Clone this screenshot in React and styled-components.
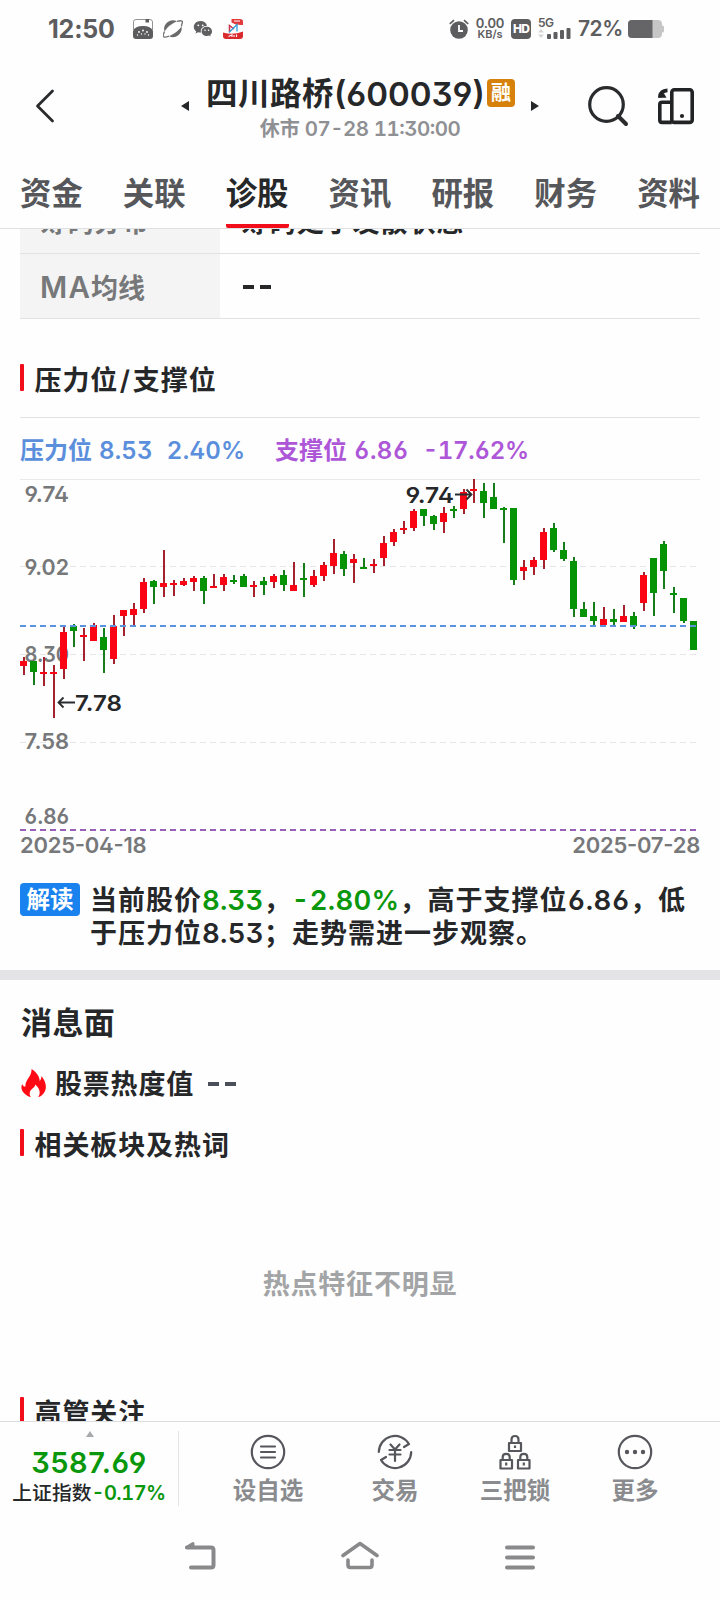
import React from 'react';
import styled, { createGlobalStyle } from 'styled-components';

// [isUp, high, bodyTop, bodyBottom, low]
const candles = [
  [1, 178, 182, 187, 196], [0, 182, 182, 193, 206], [1, 178, 193, 195, 207], [1, 186, 193, 195, 239],
  [1, 148, 153, 190, 200], [0, 145, 147, 152, 168], [1, 149, 156, 158, 182], [1, 144, 146, 162, 162],
  [0, 149, 158, 171, 194], [1, 136, 147, 180, 185], [1, 131, 131, 137, 157], [1, 124, 130, 136, 147],
  [1, 99, 103, 130, 134], [0, 101, 102, 108, 125], [1, 71, 104, 108, 118], [1, 101, 104, 106, 117],
  [1, 99, 102, 106, 107], [1, 97, 99, 103, 112], [0, 97, 99, 112, 125], [1, 95, 107, 109, 109],
  [1, 95, 98, 106, 112], [0, 96, 101, 103, 105], [0, 95, 97, 108, 108], [1, 102, 106, 108, 118],
  [0, 98, 102, 106, 116], [1, 95, 97, 103, 109], [0, 91, 96, 106, 112], [1, 83, 106, 112, 112],
  [0, 84, 99, 101, 118], [1, 91, 97, 106, 108], [1, 83, 86, 97, 102], [1, 60, 74, 87, 95],
  [0, 72, 75, 90, 97], [1, 75, 80, 84, 104], [0, 79, 88, 90, 90], [1, 80, 85, 87, 94],
  [1, 57, 64, 79, 87], [1, 50, 53, 63, 67], [1, 42, 49, 51, 55], [1, 30, 32, 49, 52],
  [0, 30, 30, 37, 47], [0, 36, 37, 45, 51], [1, 28, 34, 43, 54], [0, 27, 30, 32, 39],
  [1, 10, 13, 30, 35], [1, 0, 10, 12, 24], [0, 4, 12, 24, 39], [0, 4, 18, 30, 30],
  [0, 28, 29, 31, 64], [0, 29, 29, 101, 106], [1, 81, 88, 92, 101], [1, 78, 81, 88, 96],
  [1, 49, 53, 81, 90], [0, 44, 49, 71, 73], [0, 63, 71, 80, 82], [0, 78, 82, 130, 138],
  [0, 123, 130, 138, 138], [0, 123, 137, 142, 148], [1, 128, 140, 146, 146], [0, 130, 140, 143, 147],
  [1, 126, 137, 143, 143], [0, 133, 137, 147, 150], [1, 93, 96, 124, 132], [0, 79, 79, 114, 137],
  [0, 62, 65, 92, 110], [0, 108, 114, 116, 134], [0, 119, 119, 142, 144], [0, 142, 142, 171, 171],
];

const axisLabels = [
  ['9.74', 22.5],
  ['9.02', 96],
  ['8.30', 183],
  ['7.58', 270],
  ['6.86', 345],
];

const tabs = ['资金', '关联', '诊股', '资讯', '研报', '财务', '资料'];

const App = () => {
  return (
    <Screen>
      <GlobalStyle />
      <StatusBar />
      <Header>
        <BackButton>
          <svg width="20" height="36" viewBox="0 0 20 36">
            <path d="M17.5 3 L2.5 18 L17.5 33" fill="none" stroke="#2a2b2d" strokeWidth="2.8" strokeLinecap="round" strokeLinejoin="round" />
          </svg>
        </BackButton>
        <Arrow $dir="left" />
        <TitleBlock>
          <TitleLine>
            <StockName>四川路桥</StockName>
            <StockCode>(600039)</StockCode>
            <MarginBadge>融</MarginBadge>
          </TitleLine>
          <SubTitle>
            休市 <SubTime>07-28 11:30:00</SubTime>
          </SubTitle>
        </TitleBlock>
        <Arrow $dir="right" />
        <Tools>
          <svg width="41" height="42" viewBox="0 0 41 42">
            <circle cx="18.5" cy="18.5" r="16.8" fill="none" stroke="#2a2b2d" strokeWidth="3.2" />
            <path d="M30 30 L38 38" stroke="#2a2b2d" strokeWidth="4" strokeLinecap="round" />
          </svg>
          <svg width="36" height="37" viewBox="0 0 36 37">
            <g fill="none" stroke="#222325" strokeWidth="3.6">
              <rect x="13.8" y="1.8" width="20.4" height="32.6" rx="2.5" />
              <path d="M13.8 14.2 H4 Q1.8 14.2 1.8 16.4 V32 Q1.8 34.4 4 34.4 H13.8" />
              <path d="M2.2 9.5 Q2.2 2.6 9.5 2.4" />
            </g>
            <path d="M0 9.8 H8.5 L6 5.5 L1 4.5 Z" fill="#222325" />
            <circle cx="24" cy="28" r="2.1" fill="#222325" />
          </svg>
        </Tools>
      </Header>
      <TabBar>
        {tabs.map((tab) => (
          <Tab key={tab} $active={tab === '诊股'}>{tab}</Tab>
        ))}
      </TabBar>
      <Content>
        <Table>
          <Row>
            <RowLabel>筹码分布</RowLabel>
            <RowValue>筹码处于发散状态</RowValue>
          </Row>
          <Row>
            <RowLabel><Latin>MA</Latin>均线</RowLabel>
            <RowValue><Dashes /></RowValue>
          </Row>
        </Table>
        <SectionTitle $top={45}>压力位<Slash>/</Slash>支撑位</SectionTitle>
        <Legend>
          <LegendItem $color="#5b8fdc" $width={255}>
            压力位<LegendNum $left={7} $ls={0.2}>8.53</LegendNum><LegendNum $left={14} $ls={0.3}>2.40%</LegendNum>
          </LegendItem>
          <LegendItem $color="#ad57d8">
            支撑位<LegendNum $left={7} $ls={0.4}>6.86</LegendNum><LegendNum $left={14} $ls={-0.3}>-17.62%</LegendNum>
          </LegendItem>
        </Legend>
        <CandleChart />
        <DateRow>
          <span>2025-04-18</span>
          <span>2025-07-28</span>
        </DateRow>
        <Reading>
          <ReadingTag>解读</ReadingTag>
          <ReadingText>
            当前股价<Num $green $ls={0.2}>8.33</Num>，<Num $green $ls={0.3}>-2.80%</Num>，高于支撑位<Num $ls={0.4}>6.86</Num>，低
            <br />
            于压力位<Num $ls={0.3}>8.53</Num>；走势需进一步观察。
          </ReadingText>
        </Reading>
        <Band />
        <BlockTitle>消息面</BlockTitle>
        <HeatRow>
          <svg width="26" height="29" viewBox="0 0 26 29">
            <path d="M10.5 0 C16 3.5 18.5 7.5 18.7 12 C20 10.8 20.5 9 20.3 7 C24.5 11.5 26.3 18 23.7 22.8 C22.3 25.5 20 27.4 17 28.3 C19.8 24.5 19.3 19.8 14.2 15.5 C14.2 19 9.5 19.5 8.8 23.5 C8.5 25.3 8.8 27 9.8 28.3 C2.5 26 -1.5 20 1.3 15 C2 17 3.2 17.8 4.4 17.5 C4 10.5 11 7.5 10.5 0 Z" fill="#ff0a14" />
          </svg>
          <HeatText>股票热度值</HeatText>
          <Dashes $cool />
        </HeatRow>
        <SectionTitle $top={31}>相关板块及热词</SectionTitle>
        <Empty>热点特征不明显</Empty>
        <SectionTitle>高管关注</SectionTitle>
      </Content>
      <BottomBar />
      <SystemNav />
    </Screen>
  );
};

const StatusBar = () => (
  <StatusRow>
    <Clock>12:50</Clock>
    <StatusIcons>
      <svg width="20" height="20" viewBox="0 0 20 20">
        <path d="M.5 11 V3 Q.5 .5 3 .5 H17 Q19.5 .5 19.5 3 V11" fill="#fff" stroke="#777" strokeWidth=".8" />
        <path d="M0 12 Q2 7 10 7 Q18 7 20 12 V17 Q20 20 17 20 H3 Q0 20 0 17 Z" fill="#5c5c5e" />
        <path d="M12.5 0 H16 V3.5 H12.5 Z" fill="#5c5c5e" />
        <g fill="#fff">
          <circle cx="6" cy="13" r=".9" /><circle cx="10" cy="11.5" r=".9" /><circle cx="14" cy="13" r=".9" />
          <circle cx="8.5" cy="15" r=".7" /><circle cx="12" cy="15" r=".7" /><circle cx="4.5" cy="16" r=".7" /><circle cx="15.5" cy="16" r=".7" />
        </g>
      </svg>
      <svg width="20" height="20" viewBox="0 0 20 20">
        <path d="M1.5 12.5 A8.8 8.8 0 0 1 14 2.3 Q5.5 6 1.5 12.5 Z" fill="#6a6a6c" />
        <path d="M18.5 7.5 A8.8 8.8 0 0 1 6 17.2 Q14.500 13.500 18.500 7.500 Z" fill="#6a6a6c" />
        <path d="M14 2.3 Q21.500 .2 18.700 5.500 L18.500 7.500 M6 17.200 Q-1.500 20 .8 14.300 L1.500 12.500" fill="none" stroke="#777" strokeWidth="1.400" />
      </svg>
      <svg width="20" height="20" viewBox="0 0 20 20">
        <path d="M7.5 2 C3.5 2 .8 4.8 .8 7.9 C.8 9.8 1.8 11.3 3.2 12.4 L2.5 14.4 L5 13.2 Q6.5 13.7 8 13.5 C7 9.8 10 6.8 14 6.8 C13.3 4 10.7 2 7.5 2 Z" fill="#5f5f61" />
        <path d="M13.8 7.8 C10.8 7.8 8.6 9.9 8.6 12.4 C8.6 15 11 17 13.8 17 Q14.9 17 15.9 16.6 L17.7 17.5 L17.2 15.9 C18.4 15 19 13.8 19 12.4 C19 9.9 16.7 7.8 13.8 7.8 Z" fill="#5f5f61" />
        <g fill="#fff">
          <circle cx="5.3" cy="6.3" r=".9" /><circle cx="9.7" cy="6.3" r=".9" />
          <circle cx="12" cy="11.2" r=".8" /><circle cx="15.6" cy="11.2" r=".8" />
        </g>
      </svg>
      <svg width="20" height="20" viewBox="0 0 20 20">
        <path d="M8.5 0 H17 Q20 0 20 2.5 V6 Q13 6.5 8.5 3.5 Z" fill="#e23a3a" />
        <path d="M0 13.5 Q10 16.5 20 12.5 V17 Q20 20 17 20 H3 Q0 20 0 17 Z" fill="#d92a2e" />
        <path d="M6.5 13 V6.5 L11 10" fill="none" stroke="#c8324a" strokeWidth="1.5" />
        <path d="M6 13.5 L14 5.5 V12.5" fill="none" stroke="#2f9fd8" strokeWidth="1.3" />
        <path d="M5.5 17.5 L9 15.8 V18 M11 18 V16 M13.5 18 V15.5 M11 2 H17" stroke="#fff" strokeWidth="1.1" fill="none" />
      </svg>
    </StatusIcons>
    <StatusRight>
      <svg width="20" height="20" viewBox="0 0 20 20">
        <circle cx="10" cy="11" r="8.8" fill="#5d5d5f" />
        <path d="M.8 4.8 L5 1.2 M15 1.2 L19.2 4.8" stroke="#5d5d5f" strokeWidth="1.7" />
        <path d="M10 6 V12 H14" fill="none" stroke="#fff" strokeWidth="1.8" />
      </svg>
      <NetSpeed>
        <SpeedValue>0.00</SpeedValue>
        <SpeedUnit>KB/s</SpeedUnit>
      </NetSpeed>
      <HdBadge>HD</HdBadge>
      <Signal>
        <SignalLabel>5G</SignalLabel>
        <svg width="33" height="11" viewBox="0 0 33 11">
          <path d="M0 4.5 L3 1 L6 4.5 Z M0 6.5 L3 10 L6 6.5 Z" fill="#d4d4d5" />
          <g fill="#5d5d5f">
            <rect x="9" y="6" width="4" height="5" rx="1" /><rect x="15.5" y="4" width="4" height="7" rx="1" />
            <rect x="22" y="2" width="4" height="9" rx="1" /><rect x="28.5" y="0" width="4" height="11" rx="1" />
          </g>
        </svg>
      </Signal>
      <Percent>72%</Percent>
      <svg width="36" height="18" viewBox="0 0 36 18">
        <rect x="0" y="0" width="34" height="18" rx="4" fill="#c6c6c7" />
        <rect x="33" y="5.5" width="3" height="7" rx="1.5" fill="#c6c6c7" />
        <path d="M4 0 H24.5 V18 H4 Q0 18 0 14 V4 Q0 0 4 0 Z" fill="#656567" />
      </svg>
    </StatusRight>
  </StatusRow>
);

const CandleChart = () => (
  <ChartSvg width="720" height="353" viewBox="0 0 720 353">
    <path d="M20 .5 H700" stroke="#e9e9ea" />
    {[87.5, 175.5, 263.5].map((y) => (
      <path key={y} d={`M20 ${y} H700`} stroke="#e6e6e7" strokeDasharray="6 4" />
    ))}
    <g fill="#77787a">
      {axisLabels.map(([label, y]) => (
        <text key={label} x="24.5" y={y} textLength="44.5" lengthAdjust="spacingAndGlyphs">{label}</text>
      ))}
    </g>
    {candles.map(([up, high, top, bottom, low], i) => (
      <g key={i}>
        <rect x={23 + i * 10} y={high} width="2" height={low - high} fill={up ? '#a4222e' : '#177d1b'} />
        <rect x={20 + i * 10} y={top} width="7" height={bottom - top} fill={up ? '#fb0414' : '#069406'} />
      </g>
    ))}
    <path d="M20 147 H700" stroke="#5a92de" strokeWidth="2" strokeDasharray="6 4" />
    <path d="M20 351 H700" stroke="#9a62b6" strokeWidth="2" strokeDasharray="6 4" />
    <g fill="#262729">
      <text x="75" y="232" textLength="47" lengthAdjust="spacingAndGlyphs">7.78</text>
      <text x="405.5" y="23.5" textLength="48.5" lengthAdjust="spacingAndGlyphs">9.74</text>
    </g>
    <g fill="none" stroke="#2b2c2e" strokeWidth="1.8">
      <path d="M75 223.5 H58.5 M63.5 218.5 L58.5 223.5 L63.5 228.5" />
      <path d="M455 15.5 H471 M466.5 10.5 L471.5 15.5 L466.5 20.5" />
    </g>
  </ChartSvg>
);

const BottomBar = () => (
  <Bottom>
    <IndexBox>
      <UpMark />
      <IndexValue>3587.69</IndexValue>
      <IndexLine>
        上证指数<Num $green $ls={-0.5}>-0.17%</Num>
      </IndexLine>
    </IndexBox>
    <Actions>
      <Action>
        <svg width="36" height="36" viewBox="0 0 36 36">
          <g fill="none" stroke="#56575c" strokeWidth="2.2" strokeLinecap="round">
            <circle cx="18" cy="18" r="16.2" />
            <path d="M11 12.5 H25 M11 18 H25 M11 23.5 H25" />
          </g>
        </svg>
        设自选
      </Action>
      <Action>
        <svg width="36" height="36" viewBox="0 0 36 36">
          <g fill="none" stroke="#56575c" strokeWidth="2.2" strokeLinecap="round" strokeLinejoin="round">
            <path d="M1.8 18 A16.2 16.2 0 0 1 32 10 L27 13" />
            <path d="M34.2 18 A16.2 16.2 0 0 1 4 26 L9 23" />
            <path d="M13.5 10.5 L18 15.5 L22.5 10.5 M12.5 16 H23.5 M12.5 20.5 H23.5 M18 15.5 V27" />
          </g>
        </svg>
        交易
      </Action>
      <Action>
        <svg width="36" height="36" viewBox="0 0 36 36">
          <g fill="none" stroke="#56575c" strokeWidth="2.2" strokeLinejoin="round">
            <rect x="12" y="9" width="12" height="8" /><path d="M14.5 9 V5.5 Q14.5 2 18 2 Q21.5 2 21.5 5.5 V9 M18 11.5 V14" />
            <rect x="3.5" y="26" width="11.5" height="8.5" /><path d="M5.7 26 V23 Q5.7 19.8 9.2 19.8 Q12.7 19.8 12.7 23 V26 M9.2 28.5 V31.5" />
            <rect x="21" y="26" width="11.5" height="8.5" /><path d="M23.3 26 V23 Q23.3 19.8 26.8 19.8 Q30.3 19.8 30.3 23 V26 M26.8 28.5 V31.5" />
          </g>
        </svg>
        三把锁
      </Action>
      <Action>
        <svg width="36" height="36" viewBox="0 0 36 36">
          <circle cx="18" cy="18" r="16.2" fill="none" stroke="#56575c" strokeWidth="2.2" />
          <g fill="#56575c">
            <circle cx="10" cy="18" r="2.2" /><circle cx="18" cy="18" r="2.2" /><circle cx="26" cy="18" r="2.2" />
          </g>
        </svg>
        更多
      </Action>
    </Actions>
  </Bottom>
);

const SystemNav = () => (
  <NavRow>
    <svg width="34" height="30" viewBox="0 0 34 30">
      <path d="M4 6.5 H28 Q30.5 6.5 30.5 9 V24 Q30.5 26.5 28 26.5 H8" fill="none" stroke="#89898b" strokeWidth="4" strokeLinecap="round" />
      <path d="M10 2.5 L3.5 6.5 H10 Z" fill="#89898b" stroke="#89898b" strokeWidth="3" strokeLinejoin="round" />
    </svg>
    <svg width="38" height="30" viewBox="0 0 38 30">
      <g fill="none" stroke="#89898b" strokeWidth="3.6" strokeLinecap="round" strokeLinejoin="round">
        <path d="M2 14.5 L19 2.5 L36 14.5" />
        <path d="M7 19 V24 Q7 26.5 9.5 26.5 H28.5 Q31 26.5 31 24 V19" />
      </g>
    </svg>
    <svg width="34" height="30" viewBox="0 0 34 30">
      <path d="M4 6.5 H30 M4 16.5 H30 M4 26.5 H30" stroke="#89898b" strokeWidth="4" strokeLinecap="round" />
    </svg>
  </NavRow>
);

const GlobalStyle = createGlobalStyle`
  body {
    margin: 0;
    background: #fff;
  }
  svg {
    display: block;
    flex-shrink: 0;
  }
`;

const Screen = styled.div`
  width: 720px;
  height: 1600px;
  display: flex;
  flex-direction: column;
  overflow: hidden;
  background: #fefefe;
  color: #262729;
  font-family: Inter, 'Noto Sans CJK SC', sans-serif;
  font-feature-settings: 'ss01';
  font-weight: 600;
  white-space: nowrap;

  > * {
    flex-shrink: 0;
  }
`;

const Num = styled.span`
  letter-spacing: ${(p) => p.$ls || 0}px;
  color: ${(p) => (p.$green ? '#0a970c' : 'inherit')};
  font-feature-settings: 'ss01', 'tnum', 'case';
`;

const Latin = styled.span`
  font-size: 29.5px;
  letter-spacing: 1.2px;
`;

const Slash = styled.span`
  margin: 0 2px 0 1.5px;
`;

const StatusRow = styled.div`
  height: 56px;
  box-sizing: border-box;
  padding: 1px 56px 0 48px;
  display: flex;
  align-items: center;
  color: #5d5d5f;
`;

const Clock = styled.div`
  width: 85px;
  font-size: 25px;
  font-weight: 700;
  line-height: 30px;
  letter-spacing: -0.2px;
`;

const StatusIcons = styled.div`
  display: flex;
  gap: 10px;
`;

const StatusRight = styled.div`
  margin-left: auto;
  display: flex;
  align-items: center;
`;

const NetSpeed = styled.div`
  width: 28px;
  margin: 0 7px;
  display: flex;
  flex-direction: column;
  align-items: center;
`;

const SpeedValue = styled.span`
  font-size: 13px;
  line-height: 11px;
  letter-spacing: -0.2px;
`;

const SpeedUnit = styled.span`
  font-size: 11px;
  line-height: 11px;
`;

const HdBadge = styled.div`
  width: 20px;
  height: 20px;
  border-radius: 4px;
  background: #5d5d5f;
  color: #fff;
  font-size: 12px;
  font-weight: 800;
  line-height: 20px;
  text-align: center;
  letter-spacing: -0.8px;
`;

const Signal = styled.div`
  width: 33px;
  margin: 0 7px;
  display: flex;
  flex-direction: column;
`;

const SignalLabel = styled.span`
  font-size: 12px;
  line-height: 10px;
  letter-spacing: -0.5px;
`;

const Percent = styled.span`
  width: 50px;
  font-size: 21px;
  font-weight: 600;
  line-height: 24px;
  letter-spacing: -0.5px;
`;

const Header = styled.div`
  height: 104px;
  box-sizing: border-box;
  padding: 0 26px 0 35px;
  display: flex;
`;

const BackButton = styled.div`
  width: 146px;
  padding-top: 32px;
`;

const Arrow = styled.div`
  width: 0;
  height: 0;
  margin-top: 45px;
  border: 5px solid transparent;
  ${(p) => (p.$dir === 'left' ? 'border-left-width: 0; border-right: 8px solid #262729;' : 'border-right-width: 0; border-left: 8px solid #262729;')}
`;

const TitleBlock = styled.div`
  width: 342px;
  display: flex;
  flex-direction: column;
  align-items: center;
`;

const TitleLine = styled.div`
  height: 44px;
  margin: 15px 0 0 17px;
  display: flex;
  align-items: center;
  align-self: flex-start;
`;

const StockName = styled.span`
  width: 128px;
  font-size: 31.5px;
  font-weight: 700;
  line-height: 44px;
  letter-spacing: 0.5px;
  padding-top: 1px;
`;

const StockCode = styled.span`
  width: 153px;
  font-size: 33px;
  line-height: 44px;
  padding-top: 1px;
`;

const MarginBadge = styled.span`
  width: 28px;
  height: 28px;
  border-radius: 4px;
  background: #d6810c;
  color: #fff;
  font-size: 20px;
  line-height: 28px;
  text-align: center;
`;

const SubTitle = styled.div`
  color: #8f9093;
  font-size: 20px;
  line-height: 28px;
`;

const SubTime = styled.span`
  font-size: 20.5px;
  letter-spacing: -0.5px;
  font-feature-settings: 'ss01', 'tnum', 'case';
`;

const Tools = styled.div`
  margin-left: auto;
  padding-top: 30px;
  display: flex;
  gap: 29px;

  svg:last-child {
    margin-top: 2px;
  }
`;

const TabBar = styled.div`
  height: 69px;
  box-sizing: border-box;
  padding: 0 20px;
  display: flex;
  justify-content: space-between;
  border-bottom: 1px solid #dfe0e1;
`;

const Tab = styled.div`
  height: 68px;
  box-sizing: border-box;
  border-bottom: 4px solid ${(p) => (p.$active ? '#f20d1a' : 'transparent')};
  border-radius: 2px;
  color: ${(p) => (p.$active ? '#262729' : '#56575a')};
  font-size: 31.4px;
  line-height: 68px;
`;

const Content = styled.div`
  height: 1192px;
  overflow: hidden;
`;

const Table = styled.div`
  margin: -40px 20px 0;
`;

const Row = styled.div`
  height: 64px;
  display: flex;
  border-bottom: 1px solid #e1e2e3;
  font-size: 27px;
  line-height: 67px;
`;

const RowLabel = styled.div`
  width: 200px;
  height: 64px;
  box-sizing: border-box;
  padding-left: 20px;
  background: #f4f4f4;
  color: #77787a;
`;

const RowValue = styled.div`
  height: 64px;
  padding-left: 21px;
  letter-spacing: 0.9px;
`;

const Dashes = styled.span`
  width: 28px;
  height: 4px;
  margin: ${(p) => (p.$cool ? '2px 0 0 2px' : '31px 0 0 2px')};
  display: flex;
  justify-content: space-between;

  &::before,
  &::after {
    content: '';
    width: 11px;
    background: ${(p) => (p.$cool ? '#4b4f59' : '#262729')};
  }
`;

const SectionTitle = styled.h2`
  height: 28px;
  margin: ${(p) => p.$top || 0}px 20px 0;
  display: flex;
  font-size: 27px;
  font-weight: 600;
  line-height: 33px;
  letter-spacing: 0.9px;

  &::before {
    content: '';
    width: 4px;
    height: 27px;
    margin-right: 10.5px;
    border-radius: 1px;
    background: #f20d1a;
  }
`;

const Legend = styled.div`
  height: 61px;
  margin: 25px 20px 0;
  display: flex;
  border-top: 1px solid #e1e2e3;
  font-size: 24px;
  line-height: 65px;
`;

const LegendItem = styled.div`
  width: ${(p) => (p.$width ? `${p.$width}px` : 'auto')};
  color: ${(p) => p.$color};
`;

const LegendNum = styled.span`
  margin-left: ${(p) => p.$left}px;
  letter-spacing: ${(p) => p.$ls}px;
  font-feature-settings: 'ss01', 'tnum', 'case';
`;

const ChartSvg = styled.svg`
  font-size: 22px;
  font-weight: 600;
`;

const DateRow = styled.div`
  height: 28px;
  margin: 0 20px;
  display: flex;
  justify-content: space-between;
  color: #77787a;
  font-size: 22px;
  line-height: 27px;
  letter-spacing: -0.25px;
  font-feature-settings: 'ss01', 'case';
`;

const Reading = styled.div`
  height: 87px;
  margin: 23px 20px 0;
  display: flex;
`;

const ReadingTag = styled.div`
  width: 60px;
  height: 33px;
  border-radius: 4px;
  background: #1a82ee;
  color: #fff;
  font-size: 23.5px;
  line-height: 34px;
  text-align: center;
`;

const ReadingText = styled.p`
  margin: 1px 0 0 10px;
  font-size: 27px;
  line-height: 33px;
  letter-spacing: 1px;

  ${Num} {
    font-size: 27.5px;
  }
`;

const Band = styled.div`
  height: 10px;
  background: #e4e4e6;
`;

const BlockTitle = styled.h1`
  margin: 22px 20px 0 21px;
  font-size: 31px;
  font-weight: 600;
  line-height: 42px;
  letter-spacing: 0.4px;
`;

const HeatRow = styled.div`
  height: 30px;
  margin: 24px 20px 0 21px;
  display: flex;
  align-items: center;
`;

const HeatText = styled.span`
  width: 151px;
  margin-left: 8px;
  font-size: 27px;
  line-height: 30px;
  padding-top: 4px;
  letter-spacing: 0.8px;
`;

const Empty = styled.div`
  height: 240px;
  line-height: 255px;
  color: #a3a4a6;
  text-align: center;
  font-size: 27px;
  letter-spacing: 0.8px;
`;

const Bottom = styled.div`
  height: 85px;
  display: flex;
  border-top: 1px solid #dcdddf;
`;

const IndexBox = styled.div`
  width: 178px;
  height: 75px;
  margin-top: 9px;
  display: flex;
  flex-direction: column;
  align-items: center;
  border-right: 1px solid #e3e4e5;
`;

const UpMark = styled.div`
  margin-left: 2px;
  border: 4px solid transparent;
  border-top-width: 0;
  border-bottom: 6px solid #a8a9ab;
`;

const IndexValue = styled.div`
  margin-top: 9px;
  color: #0a970c;
  font-size: 29px;
  line-height: 34px;
  letter-spacing: 0.5px;
`;

const IndexLine = styled.div`
  font-size: 19.8px;
  font-weight: 500;
  line-height: 27px;

  ${Num} {
    font-size: 20px;
    font-weight: 600;
  }
`;

const Actions = styled.div`
  display: grid;
  grid-template-columns: 134px 120px 120px 120px;
  margin-left: 22px;
`;

const Action = styled.div`
  display: flex;
  flex-direction: column;
  align-items: center;
  padding-top: 12px;
  color: #8a8b8e;
  font-size: 23.5px;
  font-weight: 600;
  line-height: 41px;
`;

const NavRow = styled.div`
  height: 93px;
  box-sizing: border-box;
  padding-top: 34px;
  display: flex;
  justify-content: center;
  gap: 124px;
`;

export default App;
